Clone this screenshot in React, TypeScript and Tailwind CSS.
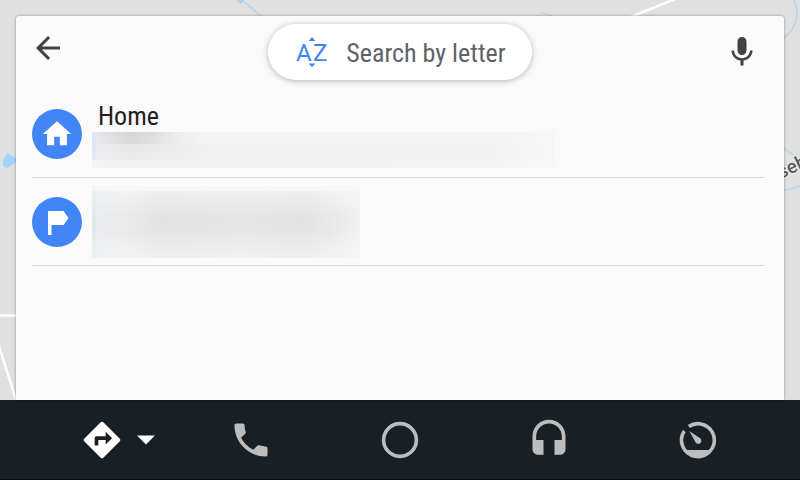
import type { ReactNode } from "react";

export default function App() {
    return (
        <div className="flex h-screen flex-col overflow-hidden bg-[#e0e0e0] font-['Roboto_Condensed','Liberation_Sans_Narrow',Roboto,sans-serif]">
            <main className="relative flex flex-1 flex-col px-4 pt-4">
                <MapBackground />

                <section className="relative flex-1 rounded-t-[3px] bg-[#fafafa] shadow-[0_0_3px_rgba(0,0,0,0.4)]">
                    <Header />
                    <ul className="mr-5 ml-4">
                        <Place icon={<HomeIcon />} title="Home">
                            <HomeAddress />
                        </Place>
                        <Place icon={<FlagIcon />}>
                            <HiddenPlace />
                        </Place>
                    </ul>
                </section>
            </main>

            <BottomNav />
        </div>
    )
}


function Header() {
    return (
        <header className="grid grid-cols-[1fr_auto_1fr] items-center px-3.5 pt-2 pb-2.5">
            <button aria-label="Back" className="justify-self-start pb-2 text-[#424242]">
                <svg viewBox="0 0 24 24" className="size-9" fill="currentColor">
                    <path d="M20 11H7.83l5.59-5.59L12 4l-8 8 8 8 1.41-1.41L7.83 13H20v-2z" />
                </svg>
            </button>

            <button className="flex h-14 items-center gap-4 rounded-full bg-white px-[26px] pt-0.5 text-[26px] text-[#5f6368] shadow-[0_1px_6px_rgba(0,0,0,0.28)]">
                <LetterIcon />
                Search by letter
            </button>

            <button aria-label="Voice search" className="justify-self-end pr-2.5 text-[#424242]">
                <svg viewBox="0 0 24 24" className="size-9" fill="currentColor">
                    <path d="M12 14c1.66 0 2.99-1.34 2.99-3L15 5c0-1.66-1.34-3-3-3S9 3.34 9 5v6c0 1.66 1.34 3 3 3zm5.3-3c0 3-2.54 5.1-5.3 5.1S6.7 14 6.7 11H5c0 3.41 2.72 6.23 6 6.72V21h2v-3.28c3.28-.48 6-3.3 6-6.72h-1.7z" />
                </svg>
            </button>
        </header>
    )
}


function Place({ icon, title, children }: { icon: ReactNode; title?: string; children: ReactNode }) {
    return (
        <li className="flex h-22 items-center gap-2.5 border-b border-[#d9d9d9]">
            <span className="grid size-[50px] shrink-0 place-items-center rounded-full bg-[#4285f4] text-white">
                {icon}
            </span>
            <div className="min-w-0 flex-1">
                {title && <p className="pl-1.5 text-[26px] leading-8 text-[#212121]">{title}</p>}
                {children}
            </div>
        </li>
    )
}


function HomeAddress() {
    return (
        <div className="w-[463px] max-w-full">
            <div className="h-1 bg-[linear-gradient(90deg,#dde5f4_0_4px,#e4e7ec_4px,#d4d4d4_40px,#dedede_62px,#ececec_84px,#f3f3f3_110px,#f3f3f3_400px,#f7f7f7_463px)]" />
            <div className="h-2 bg-[linear-gradient(90deg,#dde5f4_0_4px,#e6e9ed_4px,#d9d9d9_40px,#e1e1e1_62px,#ededed_84px,#f3f3f3_110px,#f3f3f3_400px,#f7f7f7_463px)]" />
            <div className="h-2 bg-[linear-gradient(90deg,#e0e7f4_0_4px,#eaecef_4px,#e6e6e6_40px,#ececec_84px,#f2f2f2_120px,#f2f2f2_400px,#f7f7f7_463px)]" />
            <div className="h-2 bg-[linear-gradient(90deg,#e3e9f4_0_4px,#ecedef_4px,#e9e9e9_40px,#eeeeee_84px,#f2f2f2_120px,#f2f2f2_400px,#f7f7f7_463px)]" />
            <div className="h-2 bg-[linear-gradient(90deg,#f2f3f5_0_4px,#f1f1f1_40px,#f3f3f3_400px,#f8f8f8_463px)]" />
        </div>
    )
}


function HiddenPlace() {
    return (
        <div className="h-18 w-[268px] max-w-full bg-[linear-gradient(90deg,#e4ebfa80_0_4px,#f0f3fa80_4px,#fafafa4d_36px,#fafafa00_64px,#fafafa1a_150px,#fafafa00_215px,#fafafa40_240px,#fafafa99_268px),linear-gradient(180deg,#f7f7f7_0_5px,#efefef_5px,#ebebeb_15px,#e4e4e4_28px,#e2e2e2_36px,#e4e4e4_46px,#ebebeb_58px,#f0f0f0_72px)]" />
    )
}


function BottomNav() {
    return (
        <nav className="grid h-20 grid-cols-5 items-center border-b border-[#0f0c16] bg-[#182026] px-7 pt-px text-[#bdbdbd]">
            <div className="grid grid-cols-[1fr_auto_1fr] items-center text-white">
                <span />
                <button aria-label="Navigation">
                    <svg viewBox="0 0 24 24" className="size-11" fill="currentColor">
                        <path d="M21.71 11.29l-9-9c-.39-.39-1.02-.39-1.41 0l-9 9c-.39.39-.39 1.02 0 1.41l9 9c.39.39 1.02.39 1.41 0l9-9c.39-.38.39-1.01 0-1.41zM14 14.5V12h-4v3H8v-4c0-.55.45-1 1-1h5V7.5l3.5 3.5-3.5 3.5z" />
                    </svg>
                </button>
                <button aria-label="More navigation apps" className="ml-3 justify-self-start">
                    <svg viewBox="0 0 20 10" className="h-2.5 w-5" fill="currentColor">
                        <path d="M1 .5h18l-9 9z" />
                    </svg>
                </button>
            </div>
            <button aria-label="Phone" className="justify-self-center">
                <svg viewBox="0 0 24 24" className="size-11" fill="currentColor">
                    <path d="M20 15.5c-1.25 0-2.45-.2-3.57-.57-.35-.11-.74-.03-1.02.24l-2.2 2.2c-2.83-1.44-5.15-3.75-6.59-6.59l2.2-2.21c.28-.26.36-.65.25-1C8.7 6.45 8.5 5.25 8.5 4c0-.55-.45-1-1-1H4c-.55 0-1 .45-1 1 0 9.39 7.61 17 17 17 .55 0 1-.45 1-1v-3.5c0-.55-.45-1-1-1z" />
                </svg>
            </button>
            <button aria-label="Home screen" className="justify-self-center">
                <svg viewBox="0 0 44 44" className="size-11" fill="none" stroke="currentColor" strokeWidth="3.6">
                    <circle cx="22" cy="22" r="16.4" />
                </svg>
            </button>
            <button aria-label="Audio" className="justify-self-center">
                <svg viewBox="0 0 24 24" className="size-11" fill="currentColor">
                    <path d="M12 1c-4.97 0-9 4.03-9 9v7c0 1.66 1.34 3 3 3h3v-8H5v-2c0-3.87 3.13-7 7-7s7 3.13 7 7v2h-4v8h3c1.66 0 3-1.34 3-3v-7c0-4.97-4.03-9-9-9z" />
                </svg>
            </button>
            <button aria-label="Vehicle" className="justify-self-center">
                <svg viewBox="0 0 44 44" className="size-11" fill="currentColor">
                    <path d="M12.8 8.5A16.4 16.4 0 1 1 8.3 13" fill="none" stroke="currentColor" strokeWidth="3.6" />
                    <path d="M8 32h28a18 18 0 0 1-28 0z" />
                    <path d="M13.3 13l10.8 7.2a3.1 3.1 0 1 1-4.7 3.7z" />
                </svg>
            </button>
        </nav>
    )
}


function LetterIcon() {
    return (
        <svg viewBox="0 0 36 36" className="size-9" fill="#4285f4" aria-hidden="true">
            <path d="M18 2l3.5 4h-7zM18 32l3.5-3.5h-7z" />
            <text x="2" y="26" fontSize="24" className="font-[Roboto,sans-serif]">A</text>
            <text x="19" y="26" fontSize="24" className="font-[Roboto,sans-serif]">Z</text>
        </svg>
    )
}


function HomeIcon() {
    return (
        <svg viewBox="0 0 24 24" className="size-[34px]" fill="currentColor">
            <path d="M10 20v-6h4v6h5v-8h3L12 3 2 12h3v8z" />
        </svg>
    )
}


function FlagIcon() {
    return (
        <svg viewBox="0 0 50 50" className="size-[50px]" fill="currentColor">
            <path d="M16 14h15.5l5 7-5 7H19.5v10H16z" />
        </svg>
    )
}


function MapBackground() {
    return (
        <svg viewBox="0 0 800 400" preserveAspectRatio="xMidYMid slice" className="absolute inset-0 size-full" fill="none" aria-hidden="true">
            <g stroke="#b0d3ee" strokeWidth="1.2">
                <path d="M242 0l20 17M540 12l12 4M794 0q10 22-12 40M782 146q8 8 20 14M782 190q10 0 20-5" />
            </g>
            <g fill="#a4d3fb">
                <path d="M236 0h8l-3 4zM3 160l4-7 9 5v4l-9 6-4-2z" />
            </g>
            <g stroke="#fff" strokeWidth="2.5">
                <path d="M626 19L680-3M0 315.5h18M-1 346l17 54" />
            </g>
            <text x="781" y="179" fontSize="19" fill="#5c5c5c" stroke="#f0f0f0" strokeWidth="2" paintOrder="stroke" transform="rotate(-26 781 179)" className="font-[Roboto,sans-serif] font-medium">seb</text>
        </svg>
    )
}
